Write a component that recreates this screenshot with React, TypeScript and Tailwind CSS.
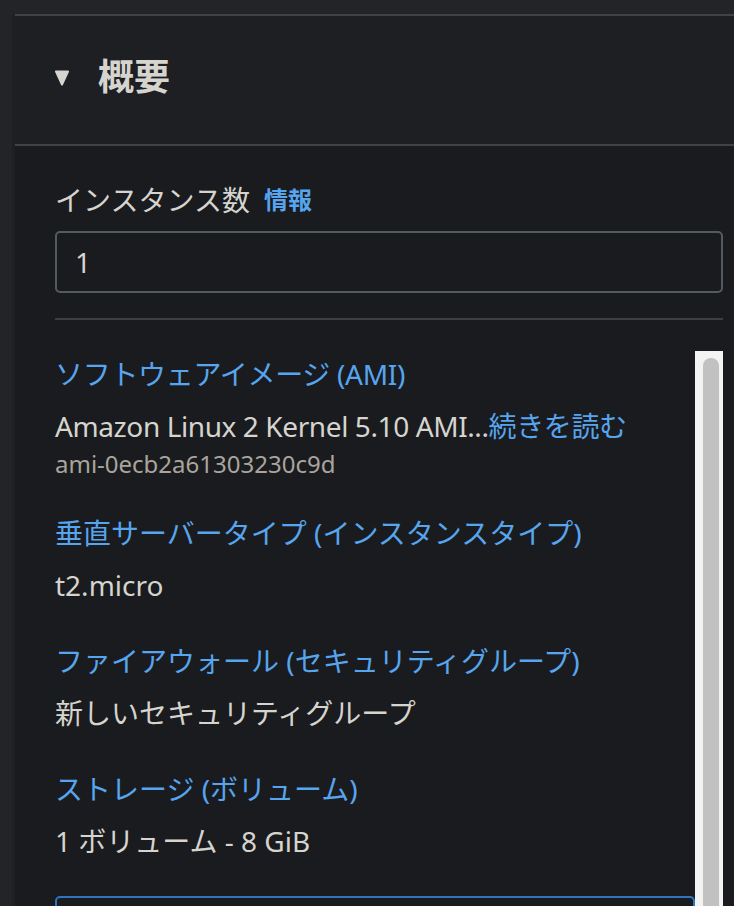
import React from "react";

const font = {
  fontFamily: '"Noto Sans", "Noto Sans CJK JP", sans-serif',
};

function Field({ label, children }: { label: string; children: React.ReactNode }) {
  return (
    <div className="mt-[36px]">
      <div className="text-[28px] leading-[40px] text-[#56a5ee] whitespace-nowrap">{label}</div>
      <div className="mt-[12px] text-[28px] leading-[40px] text-[#d5d4cf] whitespace-nowrap">{children}</div>
    </div>
  );
}

export default function App() {
  return (
    <div className="h-[906px] w-[734px] overflow-hidden bg-[#232428] pt-[14px] pl-[12px]" style={font}>
      <div className="h-full border-l-[3px] border-[#1e2021] bg-[#1a1b1e]">
        {/* header */}
        <div className="h-[132px] border-t-2 border-b-2 border-[#414244] bg-[#1e1f22] flex items-center pl-[40px] pb-[6px]">
          <svg width="14" height="16" viewBox="0 0 14 16" className="mt-[1px]">
            <path d="M1 1.5 H13 L7 14.5 Z" fill="#d5d4cf" stroke="#d5d4cf" strokeWidth="2" strokeLinejoin="round" />
          </svg>
          <h2 className="ml-[29px] text-[36px] leading-[44px] font-bold text-[#d5d4cf]">概要</h2>
        </div>

        {/* body */}
        <div className="pl-[40px] pr-[11px] pt-[34px]">
          <div className="flex items-center h-[40px] whitespace-nowrap">
            <span className="text-[28px] text-[#d5d4cf]">インスタンス数</span>
            <span className="ml-[14px] text-[24px] font-bold text-[#56a5ee]">情報</span>
          </div>
          <div className="mt-[11px] h-[62px] rounded-[5px] border-2 border-[#545b5e] flex items-center pl-[18px] text-[28px] text-[#d5d4cf]">
            1
          </div>
          <div className="mt-[25px] h-[2px] bg-[#3c3e40]" />

          <div className="mt-[31px] flex h-[600px]">
            <div className="flex-1 pt-[3px] min-w-0">
              <div className="text-[28px] leading-[40px] text-[#56a5ee] whitespace-nowrap tracking-[-0.3px]">ソフトウェアイメージ (AMI)</div>
              <div className="mt-[12px] text-[28px] leading-[40px] text-[#d5d4cf] whitespace-nowrap tracking-[-0.4px]">
                Amazon Linux 2 Kernel 5.10 AMI...<span className="text-[#56a5ee]">続きを読む</span>
              </div>
              <div className="mt-[2px] text-[24px] leading-[32px] text-[#a9a59d]">ami-0ecb2a61303230c9d</div>

              <div className="mt-[33px]">
                <div className="text-[28px] leading-[40px] text-[#56a5ee] whitespace-nowrap">垂直サーバータイプ (インスタンスタイプ)</div>
                <div className="mt-[12px] text-[28px] leading-[40px] text-[#d5d4cf]">t2.micro</div>
              </div>

              <Field label="ファイアウォール (セキュリティグループ)">新しいセキュリティグループ</Field>
              <Field label="ストレージ (ボリューム)">1 ボリューム - 8 GiB</Field>

              <div className="mt-[35px] h-[80px] rounded-[5px] border-2 border-[#2f74c0]" />
            </div>
            <div className="w-[28px] shrink-0 bg-[#f3f3f3] pl-[8px] pr-[4px] pt-[7px]">
              <div className="h-full rounded-t-full bg-[#c1c1c1]" />
            </div>
          </div>
        </div>
      </div>
    </div>
  );
}
